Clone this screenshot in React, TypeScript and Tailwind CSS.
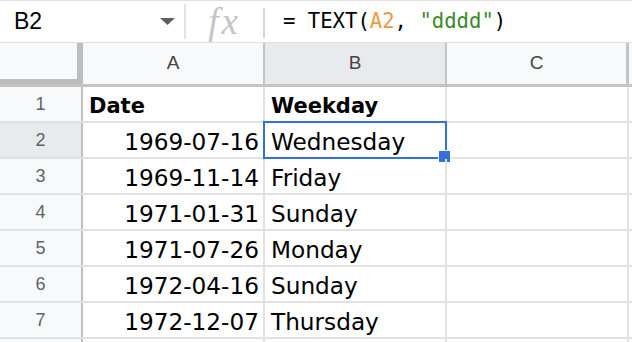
import React from "react";

const rows: [string, string][] = [
  ["1969-07-16", "Wednesday"],
  ["1969-11-14", "Friday"],
  ["1971-01-31", "Sunday"],
  ["1971-07-26", "Monday"],
  ["1972-04-16", "Sunday"],
  ["1972-12-07", "Thursday"],
];

const cellFont = { fontFamily: '"DejaVu Sans", Verdana, sans-serif' };
const uiFont = { fontFamily: '"Liberation Sans", Arial, sans-serif' };

function RowHeader({ n, selected }: { n?: number; selected?: boolean }) {
  return (
    <div
      className={`w-[83px] shrink-0 h-full flex items-center justify-center border-r-2 border-[#c0c0c0] text-[18px] text-[#5f6368] ${
        selected ? "bg-[#e8eaed]" : "bg-[#f8f9fa]"
      }`}
      style={uiFont}
    >
      {n}
    </div>
  );
}

export default function App() {
  return (
    <div className="w-[632px] h-[342px] overflow-hidden bg-white">
      {/* Formula bar */}
      <div className="h-[43px] flex items-center border-t border-b border-[#e0e0e0]">
        <div className="w-[184px] shrink-0 h-full flex items-center pl-[14px] pr-[9px] justify-between">
          <span className="text-[23px] text-black" style={uiFont}>
            B2
          </span>
          <svg width="15" height="7" viewBox="0 0 15 7">
            <path d="M0 0 L15 0 L7.5 7 Z" fill="#606060" />
          </svg>
        </div>
        <div className="w-[2px] h-[35px] bg-[#e3e3e3] shrink-0" />
        <div className="w-[77px] shrink-0 h-full flex items-center justify-center">
          <span
            className="italic text-[37px] text-[#c4c4c4] tracking-[3px] leading-[40px]"
            style={{ fontFamily: '"Liberation Serif", "Times New Roman", serif' }}
          >
            fx
          </span>
        </div>
        <div className="w-[2px] h-[30px] bg-[#d6d6d6] shrink-0 mt-[2px]" />
        <div
          className="pl-[18px] text-[20.6px] text-black whitespace-pre"
          style={{ fontFamily: '"DejaVu Sans Mono", "Liberation Mono", monospace' }}
        >
          {"= TEXT("}
          <span className="text-[#eb9a3e]">A2</span>
          {", "}
          <span className="text-[#3b8a2a]">"dddd"</span>
          {")"}
        </div>
      </div>

      {/* Column headers */}
      <div className="h-[44px] flex border-b-[3px] border-[#c4c4c4]" style={uiFont}>
        <div className="w-[83px] shrink-0 h-full bg-[#f8f9fa] border-r-[6px] border-b-[5px] border-[#bdbdbd]" />
        <div className="w-[182px] shrink-0 h-full bg-[#f8f9fa] border-r-2 border-[#c4c4c4] flex items-center justify-center text-[19px] text-[#444]">
          A
        </div>
        <div className="w-[182px] shrink-0 h-full bg-[#e8eaed] border-r-2 border-[#c4c4c4] flex items-center justify-center text-[19px] text-[#444]">
          B
        </div>
        <div className="w-[182px] shrink-0 h-full bg-[#f8f9fa] border-r-[3px] border-[#c4c4c4] flex items-center justify-center text-[19px] text-[#444]">
          C
        </div>
        <div className="flex-1 h-full bg-[#f8f9fa]" />
      </div>

      {/* Header row 1 */}
      <div className="h-[36px] flex border-b-2 border-[#e2e2e2]">
        <RowHeader n={1} />
        <div
          className="w-[182px] shrink-0 h-full border-r-2 border-[#e2e2e2] flex items-end pl-[6px] pb-[2px] leading-[26px] text-[21px] font-bold text-black"
          style={cellFont}
        >
          Date
        </div>
        <div
          className="w-[182px] shrink-0 h-full border-r-2 border-[#e2e2e2] flex items-end pl-[6px] pb-[2px] leading-[26px] text-[21px] font-bold text-black"
          style={cellFont}
        >
          Weekday
        </div>
        <div className="w-[182px] shrink-0 h-full border-r-2 border-[#e2e2e2]" />
        <div className="flex-1" />
      </div>

      {rows.map(([d, w], i) => (
        <div key={i} className="h-[36px] flex border-b-2 border-[#e2e2e2]">
          <RowHeader n={i + 2} selected={i === 0} />
          <div
            className="w-[182px] shrink-0 h-full border-r-2 border-[#e2e2e2] flex items-end justify-end pr-[4px] pb-[2px] leading-[26px] text-[23.2px] text-black"
            style={cellFont}
          >
            {d}
          </div>
          <div
            className="relative w-[182px] shrink-0 h-full border-r-2 border-[#e2e2e2] flex items-end pl-[6px] pb-[2px] leading-[26px] text-[23.2px] text-black"
            style={cellFont}
          >
            {w}
            {i === 0 && (
              <div className="absolute left-[-2px] top-[-2px] w-[184px] h-[38px] border-2 border-[#3370da]">
                <div className="absolute right-[-6px] bottom-[-6px] w-[13px] h-[13px] bg-[#3370da] border border-white" />
              </div>
            )}
          </div>
          <div className="w-[182px] shrink-0 h-full border-r-2 border-[#e2e2e2]" />
          <div className="flex-1" />
        </div>
      ))}
      <div className="h-[20px] flex">
        <RowHeader />
        <div className="w-[182px] shrink-0 h-full border-r-2 border-[#e2e2e2]" />
        <div className="w-[182px] shrink-0 h-full border-r-2 border-[#e2e2e2]" />
        <div className="w-[182px] shrink-0 h-full border-r-2 border-[#e2e2e2]" />
      </div>
    </div>
  );
}
